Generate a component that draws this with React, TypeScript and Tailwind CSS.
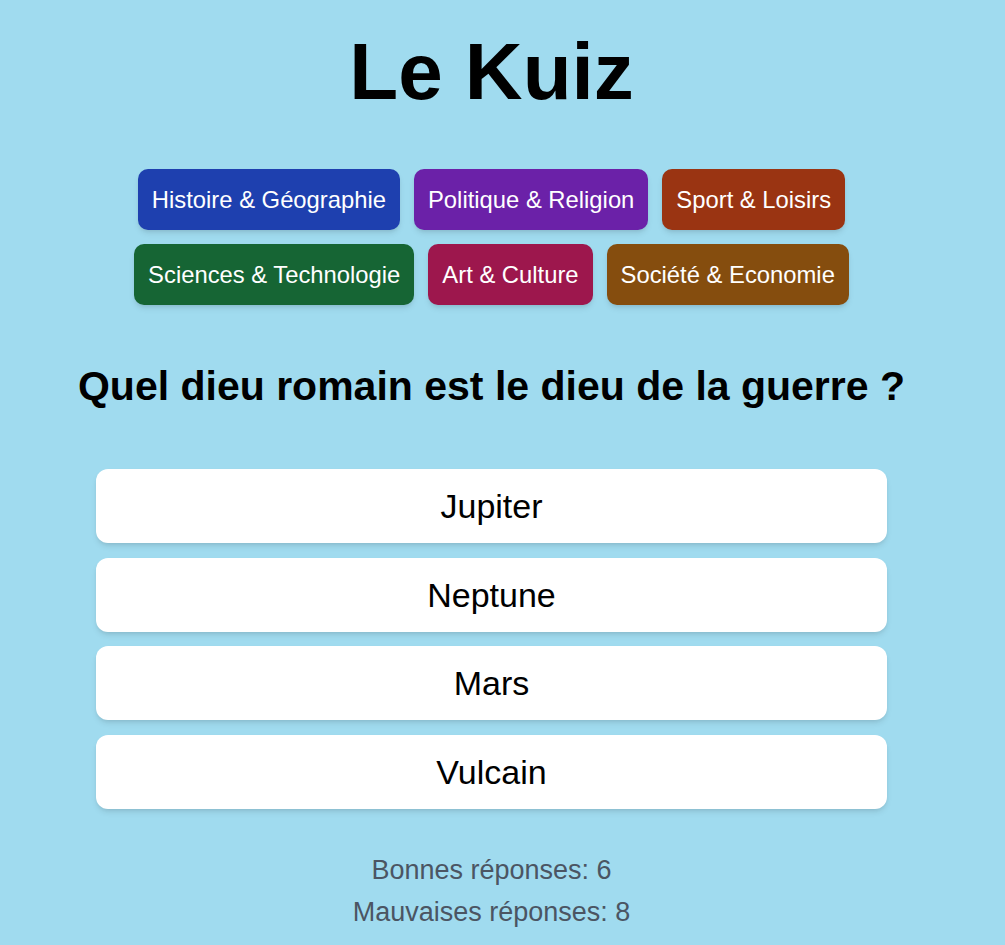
const categories = [
  [
    { label: "Histoire & Géographie", color: "bg-[#1e40af]" },
    { label: "Politique & Religion", color: "bg-[#6b21a8]" },
    { label: "Sport & Loisirs", color: "bg-[#9a3412]" },
  ],
  [
    { label: "Sciences & Technologie", color: "bg-[#166534]" },
    { label: "Art & Culture", color: "bg-[#9d174d]" },
    { label: "Société & Economie", color: "bg-[#854d0e]" },
  ],
];

const answers = ["Jupiter", "Neptune", "Mars", "Vulcain"];

const App: React.FC = () => {
  return (
    <div className="min-h-[945px] bg-[#a0dbef] font-['Liberation_Sans',Arial,sans-serif]">
      <div className="w-[983px] flex flex-col items-center pt-[32px]">
        <h1 className="text-[80px] leading-[80px] font-bold text-black">
          Le Kuiz
        </h1>

        <div className="mt-[57px] flex flex-col items-center gap-[14px]">
          {categories.map((row, i) => (
            <div key={i} className="flex gap-[14px]">
              {row.map((cat) => (
                <button
                  key={cat.label}
                  className={`${cat.color} h-[61px] px-[14px] rounded-[10px] text-white text-[23.8px] leading-none shadow-md`}
                >
                  {cat.label}
                </button>
              ))}
            </div>
          ))}
        </div>

        <h2 className="mt-[57px] text-[41px] leading-[48px] font-bold text-black">
          Quel dieu romain est le dieu de la guerre ?
        </h2>

        <div className="mt-[59px] w-full px-[96px] flex flex-col gap-[14.67px]">
          {answers.map((a) => (
            <button
              key={a}
              className="h-[74px] w-full bg-white rounded-xl shadow-md text-[34px] leading-none text-black"
            >
              {a}
            </button>
          ))}
        </div>

        <div className="mt-[40px] flex flex-col items-center text-[27px] leading-[42px] text-[#4b5563]">
          <p>Bonnes réponses: 6</p>
          <p>Mauvaises réponses: 8</p>
        </div>
      </div>
    </div>
  );
};

export default App;
